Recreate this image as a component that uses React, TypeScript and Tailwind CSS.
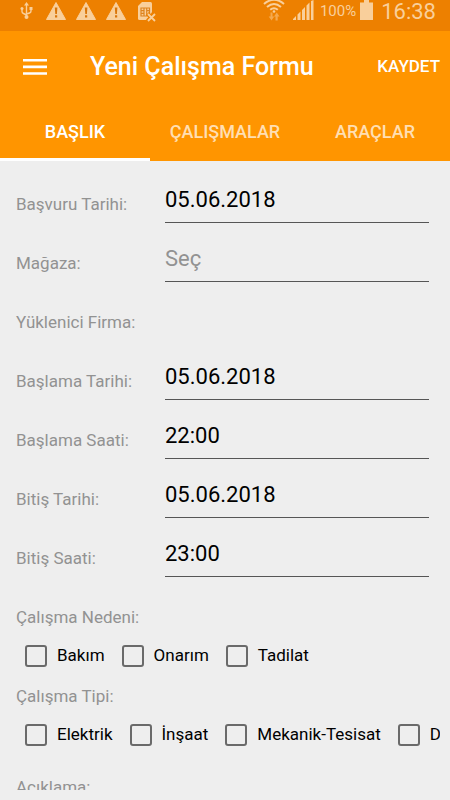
import React, { useState } from 'react';

type Field = {
  id: string;
  label: string;
  value?: string;
  placeholder?: string;
};

const tabs = ['BAŞLIK', 'ÇALIŞMALAR', 'ARAÇLAR'];

const initialFields: Field[] = [
  { id: 'basvuru-tarihi', label: 'Başvuru Tarihi:', value: '05.06.2018' },
  { id: 'magaza', label: 'Mağaza:', value: '', placeholder: 'Seç' },
  { id: 'yuklenici-firma', label: 'Yüklenici Firma:' },
  { id: 'baslama-tarihi', label: 'Başlama Tarihi:', value: '05.06.2018' },
  { id: 'baslama-saati', label: 'Başlama Saati:', value: '22:00' },
  { id: 'bitis-tarihi', label: 'Bitiş Tarihi:', value: '05.06.2018' },
  { id: 'bitis-saati', label: 'Bitiş Saati:', value: '23:00' },
];

function UsbIcon() {
  return (
    <svg width="14" height="18" viewBox="0 0 14 18" fill="currentColor">
      <path d="M6.500 0l2.500 3.500h-5z" />
      <circle cx="6.500" cy="15" r="2" />
      <rect x="0.500" y="5" width="3" height="3" rx="1.500" />
      <rect x="9.500" y="5" width="3" height="3" />
      <path d="M6.500 2v13M2 7v2.500q0 1.500 1.500 2l3 1.500M11 7v2q0 1.500-1.500 2l-3 1" fill="none" stroke="currentColor" strokeWidth="1.400" />
    </svg>
  );
}

function WarningIcon() {
  return (
    <svg width="20" height="18" viewBox="0 0 20 18">
      <path d="M10 0.500L19.500 17.500H0.500z" fill="currentColor" stroke="currentColor" strokeLinejoin="round" />
      <path d="M8.800 5.500h2.600l-.5 6.500H9.300zM9 13.200h2.200v2.200H9z" fill="#d9760a" />
    </svg>
  );
}

function SimIcon() {
  return (
    <svg width="18" height="20" viewBox="0 0 18 20">
      <path d="M4 0h8.500q1.500 0 1.500 1.500V10l-5 8H1.500Q0 18 0 16.500V4z" fill="currentColor" />
      <path d="M3 6h8.500v8H3zM3 8.700h3M3 11.400h3M6 6v8M8.700 6v8M8.700 8.700h3" fill="none" stroke="#dd8420" strokeWidth="1.200" />
      <path d="M9.500 11.500l7.500 7.500M17 11.500l-7.500 7.500" stroke="#ed8000" strokeWidth="4" />
      <path d="M10 12l7 7M17 12l-7 7" stroke="currentColor" strokeWidth="1.800" />
    </svg>
  );
}

function WifiIcon() {
  return (
    <svg width="22" height="21" viewBox="0 0 22 21" fill="none" stroke="currentColor" strokeWidth="2">
      <path d="M1 4Q11-4.500 21 4M4 7q7-6 14 0M7.200 9.800q3.800-3.200 7.600 0" />
      <circle cx="11" cy="11.500" r="1.300" fill="currentColor" stroke="none" />
      <path d="M7.500 12.500h2v4h1.800l-2.800 4-2.800-4h1.800zM12.500 20.500v-4h-1.500l2.700-4 2.800 4h-1.800v4z" fill="#f5a94e" stroke="none" />
    </svg>
  );
}

function SignalIcon() {
  return (
    <svg width="21" height="20" viewBox="0 0 21 20" fill="currentColor">
      <path d="M0 20v-1l3-3v4zM4.500 20v-5.500l3-3V20zM9 20V10l3-3v13zM13.500 20V5.500l3-3V20zM18 20V1l2.500-1v20z" />
    </svg>
  );
}

function BatteryIcon() {
  return (
    <svg width="13" height="20" viewBox="0 0 13 20" fill="currentColor">
      <path d="M4 0h5v2.500h4V20H0V2.500h4z" />
    </svg>
  );
}

function CheckOption({ label }: { label: string }) {
  return (
    <label className="flex shrink-0 items-center gap-2.5 text-[17px] text-black">
      <input
        type="checkbox"
        className="h-[22px] w-[22px] shrink-0 appearance-none rounded-[3px] border-2 border-[#6a6a6a] checked:bg-[#ff9500]"
      />
      {label}
    </label>
  );
}

function CheckGroup({ title, options }: { title: string; options: string[] }) {
  return (
    <fieldset className="min-w-0 pb-0.5">
      <legend className="h-8 px-1.5 text-[17px] leading-8 text-[#929292]">{title}</legend>
      <div className="flex h-[45px] items-center gap-[17px] overflow-hidden pl-[15px]">
        {options.map((option) => (
          <CheckOption key={option} label={option} />
        ))}
      </div>
    </fieldset>
  );
}

export default function App() {
  const [activeTab, setActiveTab] = useState(0);
  const [fields, setFields] = useState<Field[]>(initialFields);

  const handleChange = (id: string, value: string) => {
    setFields(fields.map((field) => (field.id === id ? { ...field, value } : field)));
  };

  return (
    <div className="flex h-screen flex-col overflow-hidden bg-[#eeeeee] font-[Roboto,sans-serif]">
      <div className="flex h-[31px] shrink-0 items-start justify-between bg-[#ed8000] pr-3.5 pl-5 text-[#f9cf9b]">
        <div className="flex items-start gap-2.5 pt-0.5">
          <div className="pr-0.5">
            <UsbIcon />
          </div>
          <WarningIcon />
          <WarningIcon />
          <WarningIcon />
          <div className="pl-0.5">
            <SimIcon />
          </div>
        </div>
        <div className="flex items-start">
          <WifiIcon />
          <div className="pl-2">
            <SignalIcon />
          </div>
          <span className="pr-1 pl-1.5 text-[15px] leading-[22px]">100%</span>
          <BatteryIcon />
          <span className="pl-2 text-[22px] leading-[23px]">16:38</span>
        </div>
      </div>

      <header className="shrink-0 bg-[#ff9500] text-white">
        <div className="flex h-[72px] items-center pr-2.5 pl-[23px]">
          <button type="button" aria-label="Menü" className="flex w-[67px] items-center">
            <svg width="24" height="16" viewBox="0 0 24 16" fill="currentColor">
              <path d="M0 0h24v2.600H0zM0 6.600h24v2.600H0zM0 13.200h24v2.600H0z" />
            </svg>
          </button>
          <h1 className="flex-1 text-[25px] font-medium">Yeni Çalışma Formu</h1>
          <button type="button" className="text-[17px] font-medium">
            KAYDET
          </button>
        </div>
        <nav className="grid h-[58px] grid-cols-3">
          {tabs.map((tab, index) => (
            <button
              key={tab}
              type="button"
              onClick={() => setActiveTab(index)}
              className={
                index === activeTab
                  ? 'border-y-[3px] border-t-transparent border-b-white text-lg font-medium text-white'
                  : 'border-y-[3px] border-transparent text-lg font-medium text-[#ffdfb3]'
              }
            >
              {tab}
            </button>
          ))}
        </nav>
      </header>

      <main className="mx-2.5 mt-[3px] mb-2.5 min-h-0 flex-1 overflow-hidden">
        {fields.map((field) => (
          <div key={field.id} className="flex h-[59px] items-end pr-[11px] pl-1.5">
            <label htmlFor={field.id} className="w-[149px] shrink-0 pb-[7px] text-[17px] leading-6 text-[#929292]">
              {field.label}
            </label>
            {field.value !== undefined ? (
              <input
                id={field.id}
                type="text"
                value={field.value}
                placeholder={field.placeholder}
                onChange={(e) => handleChange(field.id, e.target.value)}
                className="h-10 min-w-0 flex-1 border-b border-[#555555] pb-1.5 text-[22px] text-black outline-none placeholder:text-[#929292]"
              />
            ) : (
              <output id={field.id} className="flex-1" />
            )}
          </div>
        ))}

        <div className="pt-6">
          <CheckGroup title="Çalışma Nedeni:" options={['Bakım', 'Onarım', 'Tadilat']} />
          <CheckGroup title="Çalışma Tipi:" options={['Elektrik', 'İnşaat', 'Mekanik-Tesisat', 'Diğer']} />
        </div>

        <div className="px-1.5 pt-3">
          <label htmlFor="aciklama" className="block text-[17px] leading-8 text-[#929292]">
            Açıklama:
          </label>
          <textarea id="aciklama" className="h-20 w-full border-b border-[#555555] text-[22px] outline-none" />
        </div>
      </main>
    </div>
  );
}
